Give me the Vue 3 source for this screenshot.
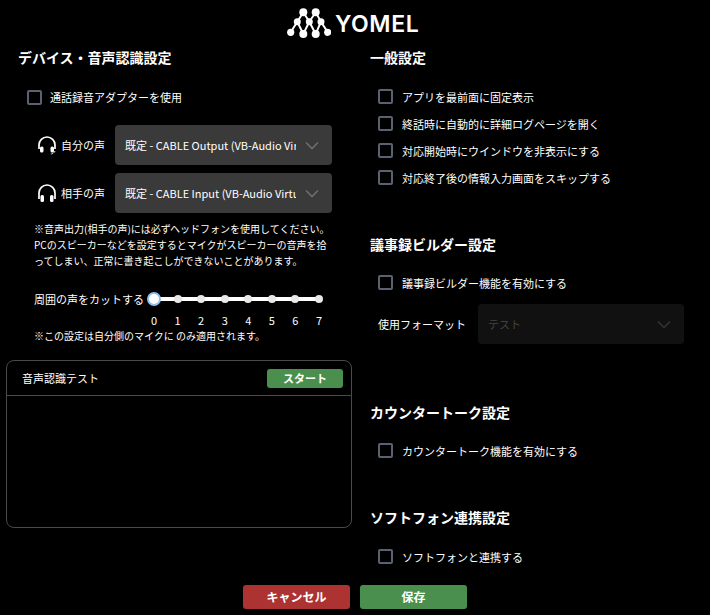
<script setup>
const general = ['アプリを最前面に固定表示', '終話時に自動的に詳細ログページを開く', '対応開始時にウインドウを非表示にする', '対応終了後の情報入力画面をスキップする']
const ticks = [0, 1, 2, 3, 4, 5, 6, 7]
</script>

<template>
  <div class="page">
    <header class="logo">
      <svg class="mark" width="44" height="31" viewBox="0 0 44 31">
        <path d="M3.700 24.300 L10.300 13.700 L16.300 4.300 L22.300 13.700 L28.700 4.300 L34 13.700 L40.700 24.300 M10.300 13.700 L16.300 26 L22.300 13.700 L28.700 26 L34 13.700" stroke="#fff" stroke-width="2" fill="none" />
        <g fill="#fff">
          <circle cx="16.300" cy="4.300" r="4" /><circle cx="28.700" cy="4.300" r="4" />
          <circle cx="10.300" cy="13.700" r="3.500" /><circle cx="22.300" cy="13.700" r="3.500" /><circle cx="34" cy="13.700" r="3.500" />
          <circle cx="3.700" cy="24.300" r="3.600" /><circle cx="16.300" cy="26" r="4" /><circle cx="28.700" cy="26" r="4" /><circle cx="40.700" cy="24.300" r="3.600" />
        </g>
      </svg>
      <span class="wordmark">YOMEL</span>
    </header>

    <main class="columns">
      <section class="left">
        <h2 class="head">デバイス・音声認識設定</h2>
        <label class="check adapter"><i class="box"></i><span>通話録音アダプターを使用</span></label>

        <div class="device first">
          <svg class="hs" width="22" height="22" viewBox="0 0 22 22" fill="none">
            <path d="M3 15 V11 a8 8 0 0 1 16 0 V15" stroke="#fff" stroke-width="1.700" />
            <rect x="4" y="12.500" width="3.500" height="6" rx="1.500" fill="#fff" />
            <rect x="14.500" y="12.500" width="3.500" height="6" rx="1.500" fill="#fff" />
            <path d="M19 17 q-1 3 -5 3" stroke="#fff" stroke-width="1" stroke-dasharray="2 1" />
          </svg>
          <span class="dlabel">自分の声</span>
          <div class="select"><span class="val">既定 - CABLE Output (VB-Audio Virtual Cable)</span><svg class="chev" width="14" height="9" viewBox="0 0 14 9" fill="none"><path d="M1 1.500 L7 7.500 L13 1.500" stroke="#6e6e6e" stroke-width="1.600" /></svg></div>
        </div>
        <div class="device">
          <svg class="hs" width="22" height="22" viewBox="0 0 22 22" fill="none">
            <path d="M3 17 V11 a8 8 0 0 1 16 0 V17" stroke="#fff" stroke-width="1.700" />
            <rect x="4.500" y="13" width="3.500" height="7" rx="1.500" fill="#fff" />
            <rect x="14" y="13" width="3.500" height="7" rx="1.500" fill="#fff" />
          </svg>
          <span class="dlabel">相手の声</span>
          <div class="select"><span class="val">既定 - CABLE Input (VB-Audio Virtual Cable)</span><svg class="chev" width="14" height="9" viewBox="0 0 14 9" fill="none"><path d="M1 1.500 L7 7.500 L13 1.500" stroke="#6e6e6e" stroke-width="1.600" /></svg></div>
        </div>

        <p class="note">※音声出力(相手の声)には必ずヘッドフォンを使用してください。<br>PCのスピーカーなどを設定するとマイクがスピーカーの音声を拾<br>ってしまい、正常に書き起こしができないことがあります。</p>

        <div class="slider-row">
          <span class="slabel">周囲の声をカットする</span>
          <div class="slider">
            <div class="track">
              <i v-for="t in ticks" :key="t" class="dot" :class="{ thumb: t === 0 }"></i>
            </div>
            <div class="nums"><span v-for="t in ticks" :key="t" class="num"><b>{{ t }}</b></span></div>
          </div>
        </div>
        <p class="note small">※この設定は自分側のマイクに のみ適用されます。</p>

        <div class="card">
          <div class="card-head"><span>音声認識テスト</span><button class="start">スタート</button></div>
          <div class="card-body"></div>
        </div>
      </section>

      <section class="right">
        <h2 class="head">一般設定</h2>
        <div class="checks">
          <label v-for="g in general" :key="g" class="check"><i class="box"></i><span>{{ g }}</span></label>
        </div>

        <h2 class="head h-minutes">議事録ビルダー設定</h2>
        <label class="check single"><i class="box"></i><span>議事録ビルダー機能を有効にする</span></label>
        <div class="format">
          <span class="flabel">使用フォーマット</span>
          <div class="select disabled"><span class="val">テスト</span><svg class="chev" width="14" height="9" viewBox="0 0 14 9" fill="none"><path d="M1 1.500 L7 7.500 L13 1.500" stroke="#333" stroke-width="1.600" /></svg></div>
        </div>

        <h2 class="head h-counter">カウンタートーク設定</h2>
        <label class="check single"><i class="box"></i><span>カウンタートーク機能を有効にする</span></label>

        <h2 class="head h-soft">ソフトフォン連携設定</h2>
        <label class="check single soft"><i class="box"></i><span>ソフトフォンと連携する</span></label>
      </section>
    </main>

    <footer class="foot">
      <button class="btn cancel">キャンセル</button>
      <button class="btn save">保存</button>
    </footer>
  </div>
</template>

<style>
html, body { margin: 0; background: #000; }
</style>

<style scoped>
.page { width: 710px; height: 615px; background: #000; color: #fff; overflow: hidden; box-sizing: border-box; font-family: "Noto Sans CJK JP", "Noto Sans", sans-serif; font-size: 11px; }
.logo { height: 44px; display: flex; align-items: flex-start; gap: 4px; padding: 8px 0 0 287px; box-sizing: border-box; }
.wordmark { font-family: "Inter", sans-serif; font-size: 23px; line-height: 34px; font-weight: 600; letter-spacing: 0.6px; margin-top: -1px; }
.columns { display: grid; grid-template-columns: 370px 340px; height: 541px; }
.head { margin: 0; font-size: 14px; line-height: 20px; font-weight: 700; }
.left { padding: 3px 0 0 18px; box-sizing: border-box; }
.right { padding-top: 3px; }
.check { display: flex; align-items: center; gap: 8px; height: 27px; line-height: 16px; }
.box { width: 11px; height: 11px; border: 2px solid #5a6272; border-radius: 2px; display: block; box-sizing: content-box; flex: none; }
.adapter { margin: 20px 0 0 9px; height: 20px; }
.device { display: flex; align-items: center; height: 40px; margin-top: 8px; width: 314px; }
.device.first { margin-top: 18px; }
.hs { margin-left: 18px; flex: none; }
.dlabel { margin-left: 3px; width: 54px; flex: none; }
.select { flex: 1; height: 40px; background: #3a3a3a; border-radius: 4px; display: flex; align-items: center; padding: 0 13px 0 10px; box-sizing: border-box; gap: 9px; min-width: 0; }
.val { flex: 1; white-space: nowrap; overflow: hidden; min-width: 0; }
.chev { flex: none; }
.note { margin: 8px 0 0 16px; font-size: 10px; line-height: 16px; width: 310px; white-space: nowrap; }
.slider-row { display: flex; margin: 21px 0 0 16px; }
.slabel { font-size: 11px; line-height: 18px; width: 120px; flex: none; }
.slider { width: 165px; }
.track { height: 4px; margin-top: 6.500px; background: #fff; display: flex; justify-content: space-between; align-items: center; }
.dot { width: 8px; height: 8px; border-radius: 50%; background: #e8e8e8; display: block; margin: 0 -4px; }
.dot.thumb { width: 10px; height: 10px; background: #fff; border: 2px solid #8fc1f0; margin: 0 -7px; }
.nums { display: flex; justify-content: space-between; margin-top: 11.500px; height: 16px; line-height: 16px; }
.num { width: 0; display: flex; justify-content: center; }
.num b { font-weight: 400; }
.small { margin-top: 0; }
.card { margin: 16px 0 0 -12px; width: 346px; height: 168px; border: 1px solid #4a4a4a; border-radius: 8px; box-sizing: border-box; }
.card-head { height: 34px; border-bottom: 1px solid #4a4a4a; display: flex; align-items: center; justify-content: space-between; padding: 0 8px 0 15px; }
.start { width: 76px; height: 19px; background: #4a8f4d; border: 0; border-radius: 3px; color: #fff; font: 700 11px/19px "Noto Sans CJK JP", sans-serif; padding: 0; }
.checks { margin: 16px 0 0 8px; }
.right .check { gap: 9px; }
.single { margin: 0 0 0 8px; }
.h-minutes { margin-top: 43px; }
.h-minutes + .single { margin-top: 15px; }
.format { display: flex; align-items: center; margin: 8px 0 0 8px; width: 306px; }
.flabel { width: 100px; flex: none; }
.select.disabled { background: #111; color: #444; }
.h-counter { margin-top: 58px; }
.h-counter + .single { margin-top: 15px; }
.h-soft { margin-top: 43px; }
.h-soft + .single { margin-top: 16px; }
.foot { display: flex; justify-content: flex-start; gap: 10px; padding-left: 243px; height: 30px; }
.btn { width: 107px; height: 24px; border: 0; border-radius: 3px; color: #fff; font: 700 12px/24px "Noto Sans CJK JP", sans-serif; padding: 0; }
.cancel { background: #ad3232; }
.save { background: #4a8f4d; }
</style>
